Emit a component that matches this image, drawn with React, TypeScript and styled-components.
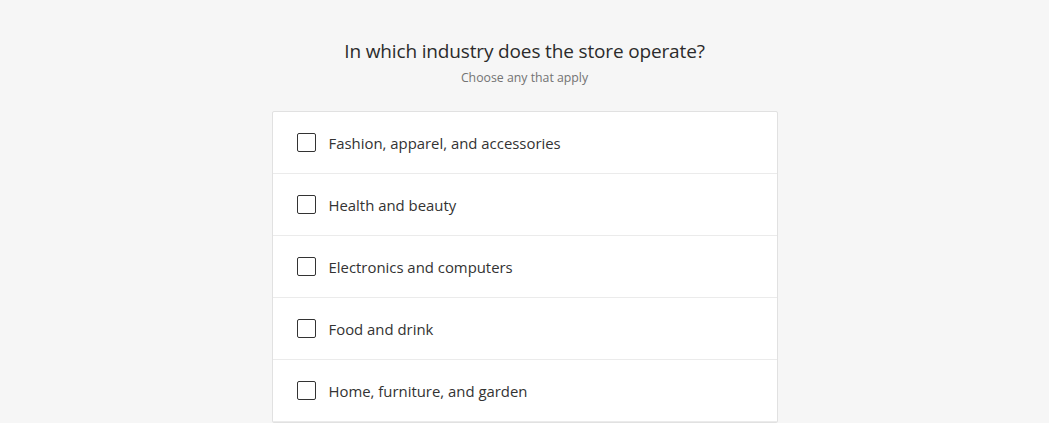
import styled, { createGlobalStyle } from 'styled-components';

const GlobalStyle = createGlobalStyle`
  body {
    margin: 0;
    background: #f6f6f6;
    font-family: "Open Sans", "Noto Sans", sans-serif;
    color: #333333;
  }
`;

const Page = styled.div`
  display: flex;
  flex-direction: column;
  align-items: center;
  padding-top: 37px;
`;

const Title = styled.h1`
  margin: 0;
  font-size: 19px;
  line-height: 28px;
  letter-spacing: -0.15px;
  font-weight: 400;
  color: #2b2b2b;
`;

const Subtitle = styled.p`
  margin: 4px 0 0;
  font-size: 12.3px;
  line-height: 18px;
  color: #737373;
`;

const Card = styled.div`
  margin-top: 24px;
  width: 504px;
  background: #ffffff;
  border: 1px solid #e1e1e1;
  border-radius: 2px;
`;

const Option = styled.label`
  display: flex;
  align-items: center;
  gap: 13px;
  height: 61px;
  padding: 0 24px;
  border-bottom: 1px solid #ebebeb;
  font-size: 14.9px;
  color: #333333;
  cursor: pointer;
`;

const Box = styled.span`
  width: 17px;
  height: 17px;
  border: 1.5px solid #333333;
  border-radius: 2px;
  flex-shrink: 0;
`;

const options = [
  'Fashion, apparel, and accessories',
  'Health and beauty',
  'Electronics and computers',
  'Food and drink',
  'Home, furniture, and garden',
];

function App() {
  return (
    <>
      <GlobalStyle />
      <Page>
        <Title>In which industry does the store operate?</Title>
        <Subtitle>Choose any that apply</Subtitle>
        <Card>
          {options.map((o) => (
            <Option key={o}>
              <Box />
              {o}
            </Option>
          ))}
        </Card>
      </Page>
    </>
  );
}

export default App;
